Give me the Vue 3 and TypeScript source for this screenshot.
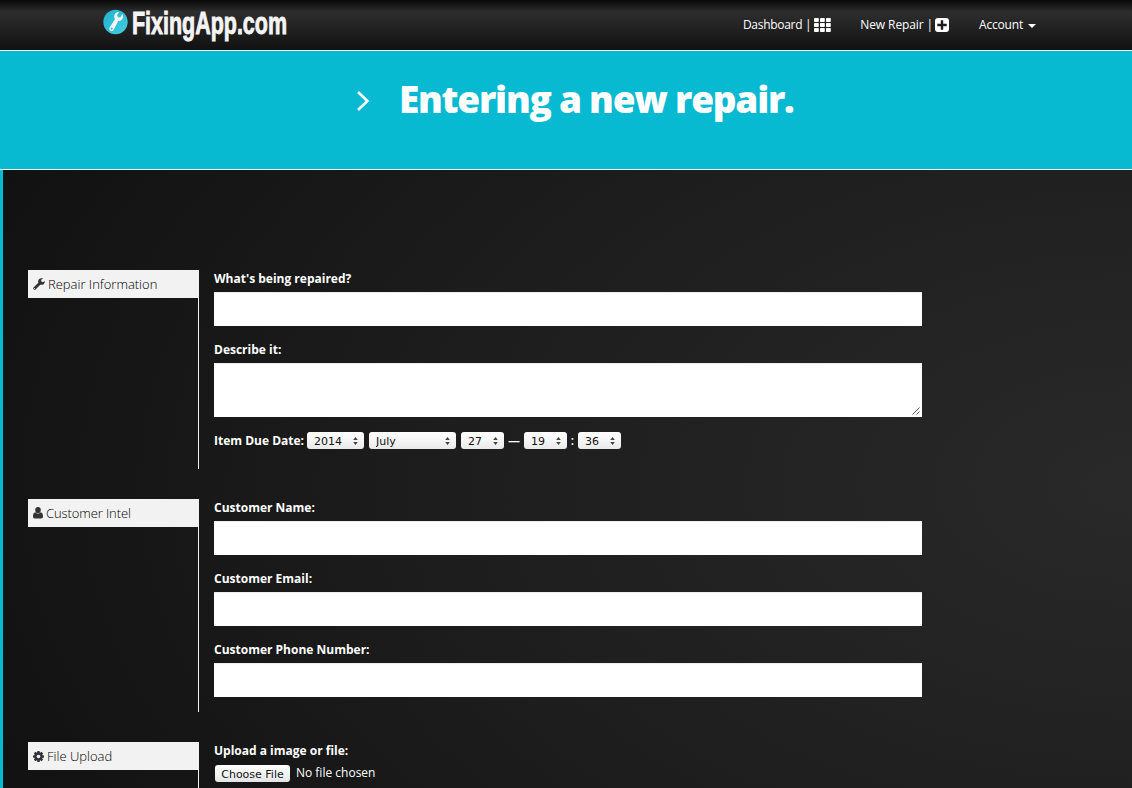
<script setup lang="ts">
import { ref } from 'vue'

interface DatePart {
  key: string
  value: string
  width: number
  after?: string
}

const dateParts = ref<DatePart[]>([
  { key: 'year', value: '2014', width: 57 },
  { key: 'month', value: 'July', width: 87 },
  { key: 'day', value: '27', width: 43, after: '—' },
  { key: 'hour', value: '19', width: 43, after: ':' },
  { key: 'minute', value: '36', width: 43 },
])

const customerFields: { label: string; type: string }[] = [
  { label: 'Customer Name:', type: 'text' },
  { label: 'Customer Email:', type: 'email' },
  { label: 'Customer Phone Number:', type: 'tel' },
]
</script>

<template>
  <div class="page">
    <header class="navbar">
      <a class="brand">
        <svg width="260" height="44" viewBox="0 0 260 44">
          <defs>
            <linearGradient id="disc" x1="0" y1="0" x2="1" y2="1">
              <stop offset="0" stop-color="#22b4cd" />
              <stop offset="0.5" stop-color="#2fbfd6" />
              <stop offset="1" stop-color="#4bcbdf" />
            </linearGradient>
          </defs>
          <circle cx="12.5" cy="16" r="12.2" fill="url(#disc)" />
          <g transform="translate(12.5 16) rotate(30)">
            <path
              d="M-1.9-2.2C-4-3.4-4.6-5.1-4.3-7.2-4-8.7-3.2-9.6-2-10.3V-6.5L0-5.3 2-6.5V-10.3C3.2-9.6 4-8.7 4.3-7.2 4.6-5.1 4-3.4 1.9-2.2L2.4 7.7A2.4 2.4 0 0 1-2.4 7.7Z"
              fill="#f7f7f7"
            />
            <circle cx="0" cy="7.6" r="1" fill="#2fbfd6" />
          </g>
          <text class="wordmark" x="29" y="27.5" textLength="155" lengthAdjust="spacingAndGlyphs">FixingApp.com</text>
        </svg>
      </a>
      <nav class="links">
        <a class="link dash"><span>Dashboard |</span>
          <svg width="17" height="14" viewBox="0 0 17 14" fill="#fff">
            <template v-for="r in 3" :key="r">
              <rect v-for="c in 3" :key="c" :x="(c - 1) * 6" :y="(r - 1) * 5" width="4.8" height="3.9" rx=".7" />
            </template>
          </svg>
        </a>
        <a class="link new"><span>New Repair |</span>
          <svg width="14" height="14" viewBox="0 0 14 14">
            <rect width="14" height="14" rx="3" fill="#fff" />
            <path d="M7 2.3V11.7M2.3 7H11.7" stroke="#1b1b1b" stroke-width="2.4" />
          </svg>
        </a>
        <a class="link account"><span>Account</span>
          <svg width="8" height="4" viewBox="0 0 8 4"><path d="M0 0H8L4 4Z" fill="#fff" /></svg>
        </a>
      </nav>
    </header>

    <div class="hero">
      <svg width="14" height="22" viewBox="0 0 14 22" fill="none">
        <path d="M2 2L11.4 11 2 20" stroke="#fff" stroke-width="2.6" />
      </svg>
      <h1>Entering a new repair.</h1>
    </div>

    <main class="content">
      <section class="group first">
        <aside class="side">
          <div class="tag">
            <svg width="12" height="12" viewBox="0 0 12 12">
              <path
                d="M11.7 3.1 9.8 4.2 8.2 3.3V1.7L10.1.5C8.9-.1 7.2 0 6.1 1.1 5.1 2.1 4.9 3.5 5.3 4.7L.5 9.5C-.6 10.7 1.3 12.6 2.5 11.5L7.3 6.7C8.5 7.1 9.9 6.8 10.9 5.9 11.7 5.1 12 4.1 11.7 3.1ZM1.5 10.9A.5.5 0 1 1 1.5 9.9.5.5 0 0 1 1.5 10.9Z"
                fill="#333"
              />
            </svg>
            <span>Repair Information</span>
          </div>
        </aside>
        <div class="fields">
          <label>What's being repaired?</label>
          <input class="control" type="text" />
          <label>Describe it:</label>
          <div class="area">
            <textarea class="control tall"></textarea>
            <svg class="grip" width="8" height="8" viewBox="0 0 8 8">
              <path d="M.5 7.5 7.5.5M4.5 7.5 7.5 4.5" stroke="#555" stroke-width="1" />
            </svg>
          </div>
          <div class="date-row">
            <label>Item Due Date:</label>
            <template v-for="part in dateParts" :key="part.key">
              <span class="picker" :class="part.key" :style="{ width: part.width + 'px' }">
                <select v-model="part.value">
                  <option :value="part.value">{{ part.value }}</option>
                </select>
                <svg class="arrows" width="5" height="8" viewBox="0 0 5 8" fill="#444">
                  <path d="M.2 3 2.5 0 4.8 3ZM.2 5 2.5 8 4.8 5Z" />
                </svg>
              </span>
              <span v-if="part.after" class="sep" :class="'after-' + part.key">{{ part.after }}</span>
            </template>
          </div>
        </div>
      </section>

      <section class="group second">
        <aside class="side">
          <div class="tag">
            <svg width="10" height="12" viewBox="0 0 10 12" fill="#333">
              <ellipse cx="5" cy="3.1" rx="2.8" ry="3.1" />
              <path d="M2.3 5.3C.5 5.7 0 7.6 0 9.5 0 10.8.6 11.5 1.7 11.5H8.3C9.4 11.5 10 10.8 10 9.5 10 7.6 9.5 5.7 7.7 5.3 6.2 7.1 3.8 7.1 2.3 5.3Z" />
            </svg>
            <span class="customer">Customer Intel</span>
          </div>
        </aside>
        <div class="fields">
          <template v-for="field in customerFields" :key="field.label">
            <label>{{ field.label }}</label>
            <input class="control" :type="field.type" />
          </template>
        </div>
      </section>

      <section class="group third">
        <aside class="side">
          <div class="tag">
            <svg width="11" height="11" viewBox="-6 -6 12 12">
              <g fill="#333">
                <rect v-for="n in 4" :key="n" x="-1.4" y="-6" width="2.8" height="12" rx=".5" :transform="`rotate(${n * 45})`" />
              </g>
              <circle r="3.3" fill="none" stroke="#333" stroke-width="2.6" />
              <circle r="2" fill="#f2f2f2" />
            </svg>
            <span>File Upload</span>
          </div>
        </aside>
        <div class="fields">
          <label>Upload a image or file:</label>
          <div class="file-row">
            <button type="button">Choose File</button>
            <span>No file chosen</span>
          </div>
        </div>
      </section>
    </main>
  </div>
</template>

<style>
html,
body {
  margin: 0;
  height: 100%;
  overflow: hidden;
  background: #1a1a1a;
}
</style>

<style scoped>
.page {
  height: 788px;
  overflow: hidden;
  display: flex;
  flex-direction: column;
  color: #fff;
  font-family: 'Open Sans', 'Noto Sans', sans-serif;
  font-size: 12px;
  line-height: 17px;
}
.navbar {
  flex: none;
  box-sizing: border-box;
  height: 51px;
  padding: 6px 96px 0 103px;
  display: flex;
  justify-content: space-between;
  align-items: flex-start;
  background: linear-gradient(#090909 0, #2d2d2d 12px, #292929 18px, #111 50px);
  border-bottom: 1px solid #f4faf8;
}
.brand,
.brand svg {
  display: block;
}
.wordmark {
  font-family: 'Liberation Sans', sans-serif;
  font-weight: 700;
  font-size: 30.5px;
  fill: #f4f4f4;
  stroke: #f4f4f4;
  stroke-width: 0.9px;
}
.links {
  display: flex;
  padding-top: 10px;
}
.link {
  display: flex;
  align-items: center;
  white-space: nowrap;
}
.dash {
  gap: 3px;
}
.dash span {
  letter-spacing: -0.3px;
}
.new {
  margin-left: 29px;
  gap: 2px;
}
.new span {
  letter-spacing: -0.1px;
}
.account {
  margin-left: 30px;
  gap: 5px;
}
.account span {
  letter-spacing: -0.2px;
}
.account svg {
  margin-top: 3px;
}
.hero {
  flex: none;
  box-sizing: border-box;
  height: 119px;
  padding: 22px 0 0 356px;
  display: flex;
  align-items: flex-start;
  gap: 29px;
  background: #07b9d1;
  border-bottom: 1px solid #f4faf8;
}
.hero svg {
  margin-top: 17px;
}
h1 {
  margin: 0;
  font-size: 37px;
  line-height: 52px;
  font-weight: 800;
  letter-spacing: -1.25px;
  white-space: nowrap;
}
.content {
  flex: 1;
  padding: 100px 0 0 25px;
  border-left: 3px solid #07b9d1;
  background: radial-gradient(ellipse 1200px 720px at 1130px 315px, #292929 0, #222 35%, #1c1c1c 62%, #111 105%);
}
.group {
  display: flex;
  margin-bottom: 30px;
}
.first {
  height: 199px;
}
.second {
  height: 213px;
}
.third {
  height: 150px;
}
.side {
  box-sizing: border-box;
  width: 171px;
  border-right: 1px solid #f2f2f2;
}
.tag {
  box-sizing: border-box;
  height: 28px;
  padding-left: 5px;
  display: flex;
  align-items: center;
  gap: 3px;
  background: #f2f2f2;
  color: #000;
  font-size: 13px;
  font-weight: 300;
  white-space: nowrap;
}
.customer {
  letter-spacing: -0.1px;
}
.fields {
  width: 708px;
  margin-left: 15px;
}
.fields label {
  display: block;
  width: max-content;
  height: 17px;
  margin-bottom: 5px;
  font-weight: 700;
  white-space: nowrap;
}
.control {
  display: block;
  box-sizing: border-box;
  width: 100%;
  height: 34px;
  margin: 0 0 15px;
  padding: 6px 12px;
  border: 0;
  border-radius: 0;
  background: #fff;
  box-shadow: inset 0 1px 1px rgba(0, 0, 0, 0.08);
  outline: none;
}
.area {
  position: relative;
}
.tall {
  height: 54px;
  resize: none;
}
.grip {
  position: absolute;
  right: 2px;
  bottom: 2px;
}
.date-row {
  display: flex;
  height: 17px;
}
.date-row label {
  margin: 0;
  width: 93px;
}
.picker {
  position: relative;
  flex: none;
  height: 17px;
}
.month,
.day {
  margin-left: 5px;
}
.picker select {
  appearance: none;
  display: block;
  box-sizing: border-box;
  width: 100%;
  height: 17px;
  margin: 0;
  padding: 2px 0 0 7px;
  border: 0;
  border-radius: 3px;
  background: linear-gradient(#fff, #f5f5f5 50%, #e9e9e9);
  color: #111;
  font: 11px 'DejaVu Sans', sans-serif;
}
.arrows {
  position: absolute;
  right: 6px;
  top: 5px;
}
.sep {
  flex: none;
  text-align: center;
  font-weight: 600;
}
.after-day {
  width: 20px;
}
.after-hour {
  width: 11px;
}
.file-row {
  display: flex;
  padding-left: 1px;
  gap: 6px;
}
.file-row button {
  box-sizing: border-box;
  width: 75px;
  height: 17px;
  margin-top: 1px;
  padding: 2px 0 0;
  border: 0;
  border-radius: 3px;
  background: linear-gradient(#fff, #f5f5f5 50%, #e4e4e4);
  color: #111;
  font: 11px 'DejaVu Sans', sans-serif;
  white-space: nowrap;
}
</style>
